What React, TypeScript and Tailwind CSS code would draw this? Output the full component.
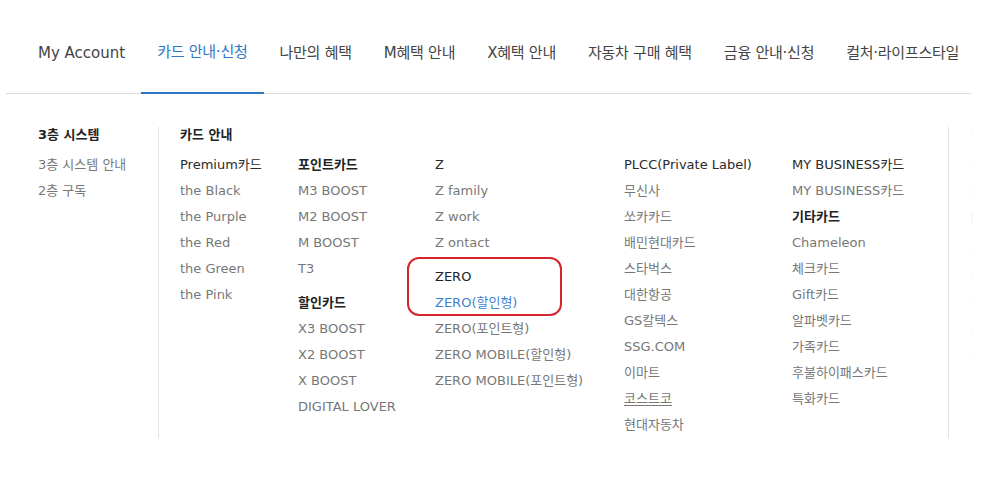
import React from "react";

type Entry = { label: string; kind?: "head" | "group" | "top" | "active" | "link" };

const NAV = [
  "My Account",
  "카드 안내·신청",
  "나만의 혜택",
  "M혜택 안내",
  "X혜택 안내",
  "자동차 구매 혜택",
  "금융 안내·신청",
  "컬처·라이프스타일",
];

const COLUMNS: Entry[][] = [
  [
    { label: "Premium카드", kind: "top" },
    { label: "the Black" },
    { label: "the Purple" },
    { label: "the Red" },
    { label: "the Green" },
    { label: "the Pink" },
  ],
  [
    { label: "포인트카드", kind: "head" },
    { label: "M3 BOOST" },
    { label: "M2 BOOST" },
    { label: "M BOOST" },
    { label: "T3" },
    { label: "할인카드", kind: "group" },
    { label: "X3 BOOST" },
    { label: "X2 BOOST" },
    { label: "X BOOST" },
    { label: "DIGITAL LOVER" },
  ],
  [
    { label: "Z", kind: "top" },
    { label: "Z family" },
    { label: "Z work" },
    { label: "Z ontact" },
    { label: "ZERO", kind: "group" },
    { label: "ZERO(할인형)", kind: "active" },
    { label: "ZERO(포인트형)" },
    { label: "ZERO MOBILE(할인형)" },
    { label: "ZERO MOBILE(포인트형)" },
  ],
  [
    { label: "PLCC(Private Label)", kind: "top" },
    { label: "무신사" },
    { label: "쏘카카드" },
    { label: "배민현대카드" },
    { label: "스타벅스" },
    { label: "대한항공" },
    { label: "GS칼텍스" },
    { label: "SSG.COM" },
    { label: "이마트" },
    { label: "코스트코", kind: "link" },
    { label: "현대자동차" },
  ],
  [
    { label: "MY BUSINESS카드", kind: "top" },
    { label: "MY BUSINESS카드" },
    { label: "기타카드", kind: "head" },
    { label: "Chameleon" },
    { label: "체크카드" },
    { label: "Gift카드" },
    { label: "알파벳카드" },
    { label: "가족카드" },
    { label: "후불하이패스카드" },
    { label: "특화카드" },
  ],
];

function Item({ e }: { e: Entry }) {
  if (e.kind === "head") return <li className="leading-[26px] font-bold text-[#222]">{e.label}</li>;
  if (e.kind === "group")
    return (
      <li className={"mt-2 leading-[26px] text-[#222] " + (e.label === "ZERO" ? "" : "font-bold")}>{e.label}</li>
    );
  if (e.kind === "top") return <li className="leading-[26px] text-[#2a2a2a]">{e.label}</li>;
  if (e.kind === "active") return <li className="leading-[26px] text-[#3f82d4]">{e.label}</li>;
  if (e.kind === "link") return <li className="leading-[26px] text-[#777] underline underline-offset-2">{e.label}</li>;
  return <li className="leading-[26px] text-[#777]">{e.label}</li>;
}

export default function App() {
  return (
    <div className="relative w-[1007px] h-[496px] overflow-hidden bg-white [font-family:'DejaVu_Sans','Noto_Sans_CJK_KR',sans-serif]">
      <div className="ml-[6px] w-[965px]">
        {/* top menu */}
        <nav className="flex pl-4 border-b border-[#dcdcdc] text-[15px]">
          {NAV.map((n, i) =>
            i === 1 ? (
              <div key={n} className="h-[94px] -mb-px px-4 pt-[13px] flex items-center border-b-2 border-[#2f77c6] text-[#2f77c6] whitespace-nowrap tracking-[-0.25px]">
                {n}
              </div>
            ) : (
              <div
                key={n}
                className={
                  "h-[93px] px-4 pt-[13px] flex items-center text-[#444] whitespace-nowrap " +
                  (i === 0 ? "" : "tracking-[-0.25px]")
                }
              >
                {n}
              </div>
            )
          )}
        </nav>

        {/* mega menu */}
        <div className="mt-[33px] flex text-[13px]">
          <div className="w-[152px] pl-8 shrink-0">
            <div className="leading-4 font-bold text-[#222]">3층 시스템</div>
            <ul className="mt-[9px]">
              <li className="leading-[26px] text-[#777]">3층 시스템 안내</li>
              <li className="leading-[26px] text-[#777]">2층 구독</li>
            </ul>
          </div>

          <div className="w-[790px] shrink-0 border-l border-[#e2e2e2] pl-[21px]">
            <div className="leading-4 font-bold text-[#222]">카드 안내</div>
            <div className="mt-[9px] grid grid-cols-[118px_137px_189px_168px_1fr]">
              {COLUMNS.map((col, i) => (
                <ul key={i} className="whitespace-nowrap">
                  {col.map((e, j) => (
                    <Item key={j} e={e} />
                  ))}
                </ul>
              ))}
            </div>
          </div>

          <div className="w-[40px] shrink-0 border-l border-[#e2e2e2] pl-[21px] text-[#f1f1f1] overflow-hidden">
            <div className="leading-4">·</div>
            <ul className="mt-[9px] text-[10px]">
              <li className="leading-[26px]">·</li>
              <li className="leading-[26px]">:</li>
              <li className="leading-[26px]">|</li>
              <li className="leading-[26px] mt-2">·</li>
              <li className="leading-[26px]">:</li>
              <li className="leading-[26px]">·</li>
              <li className="leading-[26px]">:</li>
              <li className="leading-[26px]">·</li>
            </ul>
          </div>
        </div>
      </div>

      {/* annotation highlight */}
      <div className="absolute left-[407px] top-[257px] w-[155px] h-[59px] rounded-[12px] border-2 border-[#d4262b]" />
    </div>
  );
}
